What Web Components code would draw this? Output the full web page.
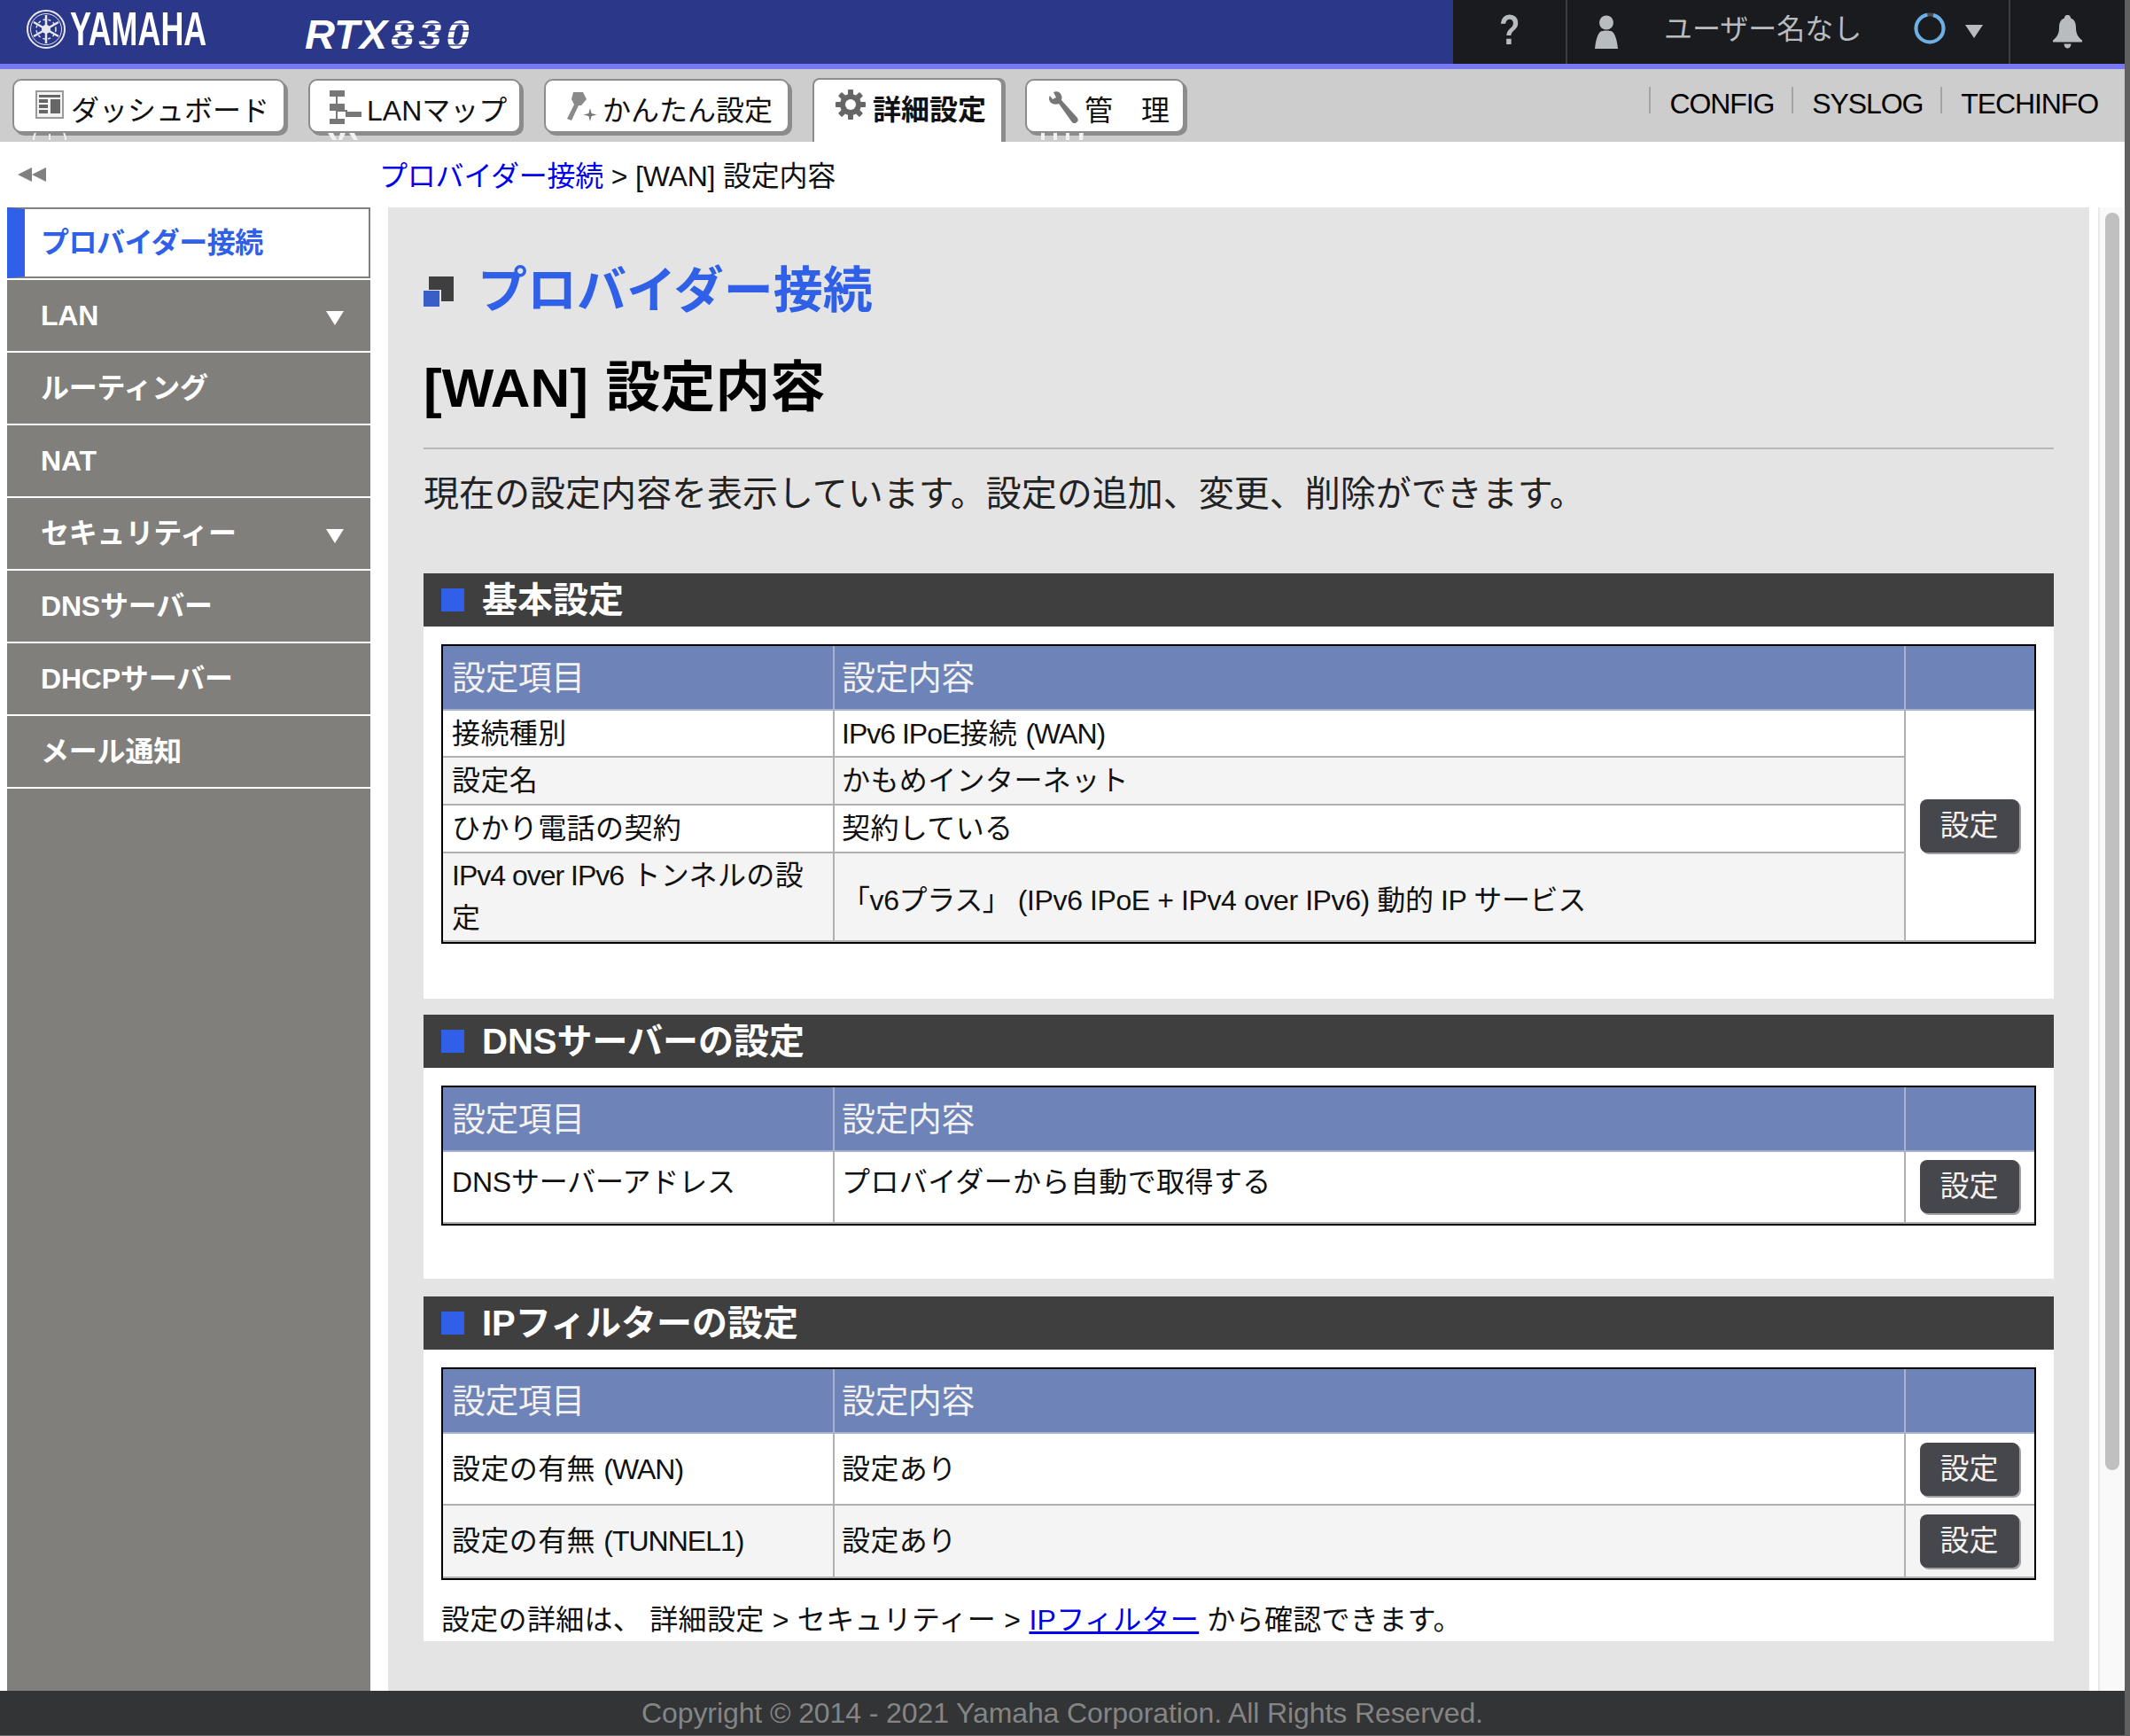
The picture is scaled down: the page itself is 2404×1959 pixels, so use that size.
<!DOCTYPE html>
<html lang="ja">
<head>
<meta charset="utf-8">
<title>RTX830</title>
<style>
  html, body { margin: 0; padding: 0; height: 1959px; overflow: hidden; }
  body {
    background: #606060;
    color: #111;
    font: 32px/48px "Liberation Sans", "Noto Sans CJK JP", sans-serif;
  }
  #page { width: 2398px; height: 1959px; display: flex; flex-direction: column; background: #fff; }
  a { color: #0000ee; text-decoration: none; }
</style>
</head>
<body>
<div id="page">
  <rtx-header></rtx-header>
  <rtx-nav>
    <nav-tab style="width:308px" pad="24" gap="8">
      <svg slot="icon" width="32" height="32" viewBox="0 0 32 32"><rect x="1" y="1" width="30" height="30" fill="#f4f4f4" stroke="#9a9a9a" stroke-width="2"/><path d="M4 5h24v3H4zM4 10h10v4H4zM4 16h10v4H4zM4 22h10v4H4zM17 10h11v16H17z" fill="#666"/></svg>
      ダッシュボード
      <svg slot="under" style="left:21px" width="38" height="8" viewBox="0 0 38 8" fill="none" stroke="#f2f2f2" stroke-width="2"><path d="M1 8a18 18 0 0 1 36 0M19 1v7"/></svg>
    </nav-tab>
    <nav-tab style="width:240px" pad="22" gap="6">
      <svg slot="icon" width="36" height="38" viewBox="0 0 36 38"><path d="M8 4v31M8 23h12" stroke="#777" stroke-width="2" fill="none"/><rect width="17" height="7" fill="#777" x="0" y="0"/><rect width="17" height="8" fill="#777" x="0" y="15"/><rect width="18" height="6" fill="#777" x="18" y="24"/><rect width="17" height="6" fill="#777" x="0" y="32"/></svg>
      LANマップ
      <svg slot="under" style="left:20px" width="38" height="8" viewBox="0 0 38 8" fill="#f2f2f2"><path d="M0 0h6l4 8H5zM14 0h6l-4 8h-4zM24 0h6l4 8h-5z"/></svg>
    </nav-tab>
    <nav-tab style="width:277px" pad="22" gap="6">
      <svg slot="icon" width="36" height="36" viewBox="0 0 36 36"><path d="M9 2h11l4 8-6 7-3 0-8 17-5-2 8-16-3-6z" fill="#8a8a8a"/><path d="M28 20l1.600 6 6 1.500-6 1.500-1.600 6-1.600-6-6-1.500 6-1.500z" fill="#777"/></svg>
      かんたん設定
    </nav-tab>
    <nav-tab active style="width:215px" pad="24" gap="8">
      <svg slot="icon" width="34" height="34" viewBox="0 0 34 34"><g fill="#666"><circle cx="17" cy="17" r="12"/><rect x="14" y="0" width="6" height="34" rx="1"/><rect x="14" y="0" width="6" height="34" rx="1" transform="rotate(45 17 17)"/><rect x="14" y="0" width="6" height="34" rx="1" transform="rotate(90 17 17)"/><rect x="14" y="0" width="6" height="34" rx="1" transform="rotate(135 17 17)"/></g><circle cx="17" cy="17" r="6" fill="#fff"/></svg>
      詳細設定
    </nav-tab>
    <nav-tab style="width:180px;margin-left:-1px" pad="23" gap="6">
      <svg slot="icon" width="36" height="37" viewBox="0 0 36 37"><path d="M3 6l3 4 4-2-3-6c4-2 8 0 9 4 1 2 0 4 0 5l18 20c1 2 1 4-1 5-2 2-4 1-5 0L13 15c-2 1-5 1-7 0-4-2-5-6-3-9z" fill="#777"/></svg>
      管　理
      <svg slot="under" style="left:16px" width="48" height="8" viewBox="0 0 48 8" fill="#f2f2f2"><path d="M0 0h4v8H0zM14 0h4v8h-4zM28 0h4v8h-4zM43 0h5l-1 8h-4z"/></svg>
    </nav-tab>
    <nav-link slot="links">CONFIG</nav-link>
    <nav-link slot="links">SYSLOG</nav-link>
    <nav-link slot="links">TECHINFO</nav-link>
  </rtx-nav>
  <rtx-crumbs><a href="#">プロバイダー接続</a> &gt; [WAN] 設定内容</rtx-crumbs>
  <rtx-main>
    <rtx-sidebar slot="side">
      <side-item active>プロバイダー接続</side-item>
      <side-item arrow>LAN</side-item>
      <side-item>ルーティング</side-item>
      <side-item>NAT</side-item>
      <side-item arrow>セキュリティー</side-item>
      <side-item>DNSサーバー</side-item>
      <side-item>DHCPサーバー</side-item>
      <side-item>メール通知</side-item>
    </rtx-sidebar>

    <page-title title="プロバイダー接続" sub="[WAN] 設定内容">現在の設定内容を表示しています。設定の追加、変更、削除ができます。</page-title>

    <setting-section heading="基本設定" pad="62">
      <setting-table rows='[
        {"h":53,"a":"接続種別","b":"<span class=l>IPv6 IPoE</span>接続 <span class=l>(WAN)</span>","btnSpan":4},
        {"h":54,"a":"設定名","b":"かもめインターネット"},
        {"h":54,"a":"ひかり電話の契約","b":"契約している"},
        {"h":100,"a":"<span class=l>IPv4 over IPv6</span> トンネルの設<br>定","b":"<span class=dn>「v6プラス」 (IPv6 IPoE + IPv4 over IPv6) 動的 IP サービス</span>"}
      ]'></setting-table>
    </setting-section>
    <setting-section heading="DNSサーバーの設定" pad="60" style="margin-bottom:20px">
      <setting-table rows='[{"h":81,"a":"<span class=\"up tight\">DNSサーバーアドレス</span>","b":"<span class=up>プロバイダーから自動で取得する</span>","btnSpan":1,"btnUp":true}]'></setting-table>
    </setting-section>
    <setting-section heading="IPフィルターの設定" pad="0">
      <setting-table rows='[
        {"h":81,"a":"設定の有無 <span class=l>(WAN)</span>","b":"設定あり","btnSpan":1},
        {"h":82,"a":"設定の有無 <span class=l>(TUNNEL1)</span>","b":"設定あり","btnSpan":1}
      ]'></setting-table>
      <section-note>設定の詳細は、 詳細設定 &gt; セキュリティー &gt; <a href="#" style="text-decoration:underline">IPフィルター</a> から確認できます。</section-note>
    </setting-section>
  </rtx-main>
  <rtx-footer>Copyright © 2014 - 2021 Yamaha Corporation. All Rights Reserved.</rtx-footer>
</div>

<script>
// small helper so every element gets an open shadow root
class Base extends HTMLElement {
  render(html) {
    this.attachShadow({ mode: 'open' }).innerHTML = html;
  }
}

class RtxHeader extends Base {
  constructor() {
    super();
    this.render(`
      <style>
        :host { display: flex; height: 72px; background: #2b3788; border-bottom: 6px solid #7878f0; flex: none; }
        .logo { width: 1640px; display: flex; align-items: flex-start; flex: none; }
        .emblem { margin: 11px 5px 0 30px; flex: none; }
        .yamaha { width: 153px; margin-top: 4px; font: bold 54px/56px "Liberation Sans", sans-serif; color: #fff; transform: scaleX(.665); transform-origin: left; white-space: nowrap; }
        .model { margin: 13px 0 0 112px; font: italic bold 47px/52px "Liberation Sans", sans-serif; color: #fff; white-space: nowrap; }
        .model b {
          margin-left: 4px; letter-spacing: 5px;
          background: repeating-linear-gradient(180deg, #fff 0 6px, #6a73ac 6px 8px);
          -webkit-background-clip: text; background-clip: text; color: transparent;
        }
        .dark { flex: 1; background: #1a1b1e; color: #b8bcbf; display: flex; align-items: stretch; }
        .dark > div { display: flex; align-items: center; box-sizing: border-box; }
        .help { width: 129px; justify-content: center; border-right: 2px solid #3c3d40; font: bold 48px/50px "Liberation Sans", sans-serif; }
        .help span { display: block; transform: scaleX(.8); margin-top: -4px; }
        .user { width: 500px; border-right: 2px solid #3c3d40; padding-left: 31px; white-space: nowrap; }
        .name { margin-left: 52px; width: 224px; position: relative; top: -3px; letter-spacing: 0; }
        .ring { margin: -8px 0 0 58px; }
        .tri { margin: -1px 0 0 22px; }
        .bell { flex: 1; padding-left: 48px; }
      </style>
      <div class="logo">
        <svg class="emblem" width="44" height="44" viewBox="0 0 44 44" fill="none" stroke="#e8e8f0">
          <circle cx="22" cy="22" r="21" stroke-width="2"/><circle cx="22" cy="22" r="17.500" stroke-width="1"/>
          <g stroke-width="2.500"><path d="M22 6v32M8 14l28 16M8 30l28-16"/></g>
          <circle cx="22" cy="22" r="5" fill="#e8e8f0" stroke="none"/>
          <circle cx="22" cy="22" r="11" stroke-width="1.500" stroke-dasharray="3 3"/>
        </svg>
        <div class="yamaha">YAMAHA</div>
        <div class="model">RTX<b>830</b></div>
      </div>
      <div class="dark">
        <div class="help"><span>?</span></div>
        <div class="user">
          <svg width="26" height="38" viewBox="0 0 26 38" fill="#b8bcbf"><circle cx="13" cy="8.500" r="8"/><path d="M6 19c2-2 12-2 14 0 3 3 5 9 6 19H0C1 28 3 22 6 19z"/></svg>
          <div class="name">ユーザー名なし</div>
          <svg class="ring" width="36" height="38" viewBox="0 0 36 38" fill="none" stroke-width="4"><circle cx="18" cy="19" r="15.500" stroke="#4a4c50"/><circle cx="18" cy="19" r="15.500" stroke="#6cb0e8" stroke-dasharray="90 7.400" stroke-dashoffset="-4" transform="rotate(-90 18 19)"/></svg>
          <svg class="tri" width="20" height="15" viewBox="0 0 20 15" fill="#b8bcbf"><path d="M0 0h20L10 15z"/></svg>
        </div>
        <div class="bell">
          <svg width="33" height="38" viewBox="0 0 33 38" fill="#b8bcbf"><path d="M16.500 0c3 0 3.500 2 3.500 3.500 5 2 6 6 6 11 0 7 3 11 7 14v2H0v-2c4-3 7-7 7-14 0-5 1-9 6-11C13 2 13.500 0 16.500 0zM12.500 32.500h8c0 3-2 5-4 5s-4-2-4-5z"/></svg>
        </div>
      </div>`);
  }
}

class RtxNav extends Base {
  constructor() {
    super();
    this.render(`
      <style>
        :host { display: flex; height: 82px; background: #cdcdcd; flex: none; padding: 11px 0 0 14px; box-sizing: border-box; justify-content: space-between; }
        .tabs { display: flex; gap: 26px; align-items: flex-start; }
        .links { display: flex; padding: 9px 30px 0 0; align-items: flex-start; }
      </style>
      <div class="tabs"><slot></slot></div>
      <div class="links"><slot name="links"></slot></div>`);
  }
}

class NavTab extends Base {
  constructor() {
    super();
    const pad = this.getAttribute('pad') || 20;
    const gap = this.getAttribute('gap') || 6;
    this.render(`
      <style>
        :host {
          display: flex; align-items: flex-start; box-sizing: border-box; position: relative;
          height: 61px; background: #fff; border: 2px solid #8c8c8c; border-radius: 10px;
          box-shadow: 3px 3px 0 #8c8c8c; padding-left: ${pad}px; white-space: nowrap; flex: none;
        }
        :host([active]) { height: 72px; margin-top: -1px; border-bottom: 0; border-radius: 8px 8px 0 0; box-shadow: 3px 0 0 #8c8c8c; font-weight: bold; }
        .ic { display: flex; margin: 11px ${gap}px 0 0; flex: none; }
        .tx { margin-top: 10px; line-height: 48px; }
        ::slotted([slot=under]) { position: absolute; top: 100%; margin-top: 2px; }
      </style>
      <span class="ic"><slot name="icon"></slot></span><span class="tx"><slot></slot></span><slot name="under"></slot>`);
  }
}

class NavLink extends Base {
  constructor() {
    super();
    this.render(`
      <style>
        :host { display: block; height: 30px; border-left: 2px solid #a4a4a4; padding-left: 21px; margin-left: 20px; line-height: 36px; color: #000; letter-spacing: -1.100px; }
        div { margin-top: 1px; }
      </style><div><slot></slot></div>`);
  }
}

class RtxCrumbs extends Base {
  constructor() {
    super();
    this.render(`
      <style>
        :host { display: flex; align-items: center; height: 74px; background: #fff; flex: none; padding-left: 20px; letter-spacing: -.2px; }
        svg { flex: none; margin-right: 376px; }
        div { margin-top: 3px; }
      </style>
      <svg width="32" height="16" viewBox="0 0 32 16" fill="#808080"><path d="M16 0v16L0 8zM32 0v16L16 8z"/></svg>
      <div><slot></slot></div>`);
  }
}

class RtxMain extends Base {
  constructor() {
    super();
    this.render(`
      <style>
        :host { display: flex; flex: 1; min-height: 0; background: #fff; padding-left: 8px; }
        .content { width: 1920px; margin-left: 20px; background: #e4e4e4; padding: 0 40px; box-sizing: border-box; flex: none; }
        .track { margin-left: 10px; flex: 1; background: #f9f9f9; border-left: 2px solid #e8e8e8; padding: 6px 6px 0 6px; }
        .thumb { height: 1419px; background: #c0c0c0; border-radius: 8px; }
      </style>
      <slot name="side"></slot>
      <div class="content"><slot></slot></div>
      <div class="track"><div class="thumb"></div></div>`);
  }
}

class RtxSidebar extends Base {
  constructor() {
    super();
    this.render(`
      <style>
        :host { display: flex; flex-direction: column; width: 410px; flex: none; background: #807f7c; }
        .pad { display: flex; flex-direction: column; gap: 2px; background: #fff; padding-bottom: 2px; }
      </style>
      <div class="pad"><slot></slot></div>`);
  }
}

class SideItem extends Base {
  constructor() {
    super();
    const arrow = this.hasAttribute('arrow');
    this.render(`
      <style>
        :host { display: flex; align-items: center; justify-content: space-between; box-sizing: border-box; height: 80px; background: #807f7c; color: #fff; font-weight: bold; padding: 0 30px 0 38px; letter-spacing: -.2px; }
        :host([active]) { border: 2px solid #808080; border-left: 20px solid #3060e8; background: #fff; color: #3060e8; padding-left: 18px; letter-spacing: -.5px; }
        svg { margin-top: 6px; }
      </style>
      <span><slot></slot></span>
      ${arrow ? '<svg width="20" height="16" viewBox="0 0 20 16" fill="#fff"><path d="M0 0h20L10 16z"/></svg>' : ''}`);
  }
}

class PageTitle extends Base {
  constructor() {
    super();
    this.render(`
      <style>
        :host { display: block; padding-top: 54px; }
        .t { display: flex; align-items: center; height: 80px; gap: 27px; font: bold 56px/80px "Liberation Sans", "Noto Sans CJK JP", sans-serif; color: #3060e8; }
        .t svg { margin-top: 1px; flex: none; }
        .s { margin-top: 30px; height: 80px; font: bold 62px/80px "Liberation Sans", "Noto Sans CJK JP", sans-serif; color: #000; padding-bottom: 27px; border-bottom: 2px solid #b8b8b8; word-spacing: 2px; }
        .d { margin: 20px 0 60px; font-size: 40px; line-height: 60px; color: #222; }
      </style>
      <div class="t">
        <svg width="34" height="34" viewBox="0 0 34 34"><rect x="6" width="28" height="28" fill="#3f3f3f"/><rect y="15" x="-1" width="21" height="20" fill="#e4e4e4"/><rect y="16" width="18" height="18" fill="#3a5ec8"/></svg>
        <span>${this.getAttribute('title')}</span>
      </div>
      <div class="s">${this.getAttribute('sub')}</div>
      <div class="d"><slot></slot></div>`);
  }
}

class SettingSection extends Base {
  constructor() {
    super();
    this.render(`
      <style>
        :host { display: block; margin-bottom: 18px; background: #fff; }
        .bar { display: flex; align-items: center; height: 60px; background: #3f3f3f; color: #fff; padding-left: 20px; font: bold 40px/60px "Liberation Sans", "Noto Sans CJK JP", sans-serif; }
        .bar i { width: 26px; height: 26px; background: #3060e8; margin-right: 20px; }
        .body { padding: 20px 20px ${this.getAttribute('pad')}px; }
      </style>
      <div class="bar"><i></i><span>${this.getAttribute('heading')}</span></div>
      <div class="body"><slot></slot></div>`);
  }
}

class SettingTable extends Base {
  connectedCallback() {
    if (this.shadowRoot) return;
    const rows = JSON.parse(this.getAttribute('rows'));
    const trs = rows.map((r, i) => `
      <tr style="height:${r.h}px" class="${i % 2 ? 'alt' : ''}">
        <td>${r.a}</td><td>${r.b}</td>
        ${r.btnSpan ? `<td class="b" rowspan="${r.btnSpan}"><set-button ${r.btnUp ? 'style="top:-1px"' : ''}>設定</set-button></td>` : ''}
      </tr>`).join('');
    this.render(`
      <style>
        :host { display: block; }
        table { width: 1800px; border: 2px solid #000; border-spacing: 0; table-layout: fixed; box-sizing: border-box; }
        th, td { box-sizing: border-box; border-right: 2px solid #b0b0b0; border-bottom: 2px solid #b0b0b0; padding: 0 10px; text-align: left; font-weight: normal; }
        th:last-child, td.b { border-right: 0; }
        th + th, td + td { padding-left: 8px; }
        th { height: 73px; background: #6e83b7; color: #f2f2f2; font-size: 38px; letter-spacing: -.6px; border-color: #a8b2cc; }
        td { background: #fff; color: #111; line-height: 48px; letter-spacing: .4px; }
        tr.alt td { background: #f4f4f4; }
        td.b { text-align: center; padding: 0; }
        col.c1 { width: 442px; } col.c3 { width: 145px; }
        .l { letter-spacing: -1px; }
        .up { position: relative; top: -6px; }
        .tight { letter-spacing: -.2px; }
        .dn { position: relative; top: 4px; letter-spacing: -.4px; }
        set-button { position: relative; }
      </style>
      <table>
        <colgroup><col class="c1"><col><col class="c3"></colgroup>
        <tr><th>設定項目</th><th>設定内容</th><th></th></tr>
        ${trs}
      </table>`);
  }
}

class SetButton extends Base {
  constructor() {
    super();
    this.render(`
      <style>
        :host { display: inline-flex; align-items: center; justify-content: center; width: 112px; height: 60px; border-radius: 8px; background: #46474d; color: #f2f2f2; box-shadow: 2px 2px 0 #a0a0a0; vertical-align: middle; margin-right: 2px; font-size: 33px; letter-spacing: 0; }
      </style><slot></slot>`);
  }
}

class SectionNote extends Base {
  constructor() {
    super();
    this.render(`
      <style>:host { display: block; height: 69px; box-sizing: border-box; padding-top: 21px; line-height: 48px; letter-spacing: .3px; white-space: nowrap; color: #111; margin-bottom: -20px; }</style>
      <slot></slot>`);
  }
}

class RtxFooter extends Base {
  constructor() {
    super();
    this.render(`
      <style>
        :host { display: flex; align-items: center; justify-content: center; height: 50px; flex: none; background: #323435; color: #858585; letter-spacing: -.1px; border-bottom: 1px solid #6a6a6a; white-space: nowrap; }
      </style><slot></slot>`);
  }
}

customElements.define('rtx-header', RtxHeader);
customElements.define('rtx-nav', RtxNav);
customElements.define('nav-tab', NavTab);
customElements.define('nav-link', NavLink);
customElements.define('rtx-crumbs', RtxCrumbs);
customElements.define('rtx-main', RtxMain);
customElements.define('rtx-sidebar', RtxSidebar);
customElements.define('side-item', SideItem);
customElements.define('page-title', PageTitle);
customElements.define('setting-section', SettingSection);
customElements.define('setting-table', SettingTable);
customElements.define('set-button', SetButton);
customElements.define('section-note', SectionNote);
customElements.define('rtx-footer', RtxFooter);
</script>
</body>
</html>
